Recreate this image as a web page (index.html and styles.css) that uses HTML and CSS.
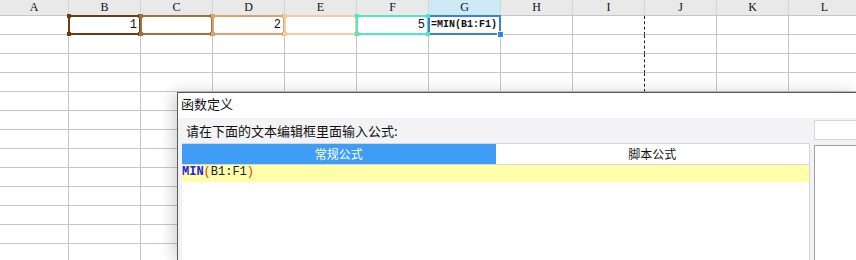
FILE: index.html
```html
<!DOCTYPE html>
<html lang="zh-CN">
<head>
    <meta charset="UTF-8">
    <title>函数定义</title>
    <link rel="stylesheet" href="styles.css">
</head>
<body>
    <div class="sheet">
        <!-- Column headers -->
        <div class="row head">
            <div class="cell col-a">A</div>
            <div class="cell">B</div>
            <div class="cell">C</div>
            <div class="cell">D</div>
            <div class="cell">E</div>
            <div class="cell">F</div>
            <div class="cell active-head">G</div>
            <div class="cell">H</div>
            <div class="cell">I</div>
            <div class="cell">J</div>
            <div class="cell">K</div>
            <div class="cell">L</div>
        </div>

        <!-- Row 1 -->
        <div class="row">
            <div class="cell col-a"></div>
            <div class="cell num ref ref-b">1</div>
            <div class="cell ref ref-c"></div>
            <div class="cell num ref ref-d">2</div>
            <div class="cell ref ref-e"></div>
            <div class="cell num ref ref-f">5</div>
            <div class="cell formula selected">=MIN(B1:F1)</div>
            <div class="cell"></div>
            <div class="cell page-break"></div>
            <div class="cell"></div>
            <div class="cell"></div>
            <div class="cell"></div>
        </div>
    </div>

    <!-- Function dialog -->
    <div class="dialog">
        <div class="dialog-title">函数定义</div>
        <div class="dialog-body">
            <div class="main-col">
                <div class="prompt">请在下面的文本编辑框里面输入公式:</div>
                <div class="editor">
                    <div class="tabs">
                        <div class="tab active">常规公式</div>
                        <div class="tab">脚本公式</div>
                    </div>
                    <div class="code">
                        <div class="code-line"><span class="kw">MIN</span><span class="paren">(</span>B1:F1<span class="paren">)</span></div>
                    </div>
                </div>
            </div>
            <div class="side-col">
                <div class="search-box"></div>
                <div class="list-box"></div>
            </div>
        </div>
    </div>

    <script>
        // fill the remaining empty rows of the sheet
        const sheet = document.querySelector(".sheet");
        for (let r = 0; r < 12; r++) {
            const row = document.createElement("div");
            row.className = "row";
            for (let c = 0; c < 12; c++) {
                const cell = document.createElement("div");
                cell.className = "cell";
                if (c === 0) cell.classList.add("col-a");
                if (c === 8) cell.classList.add("page-break");
                row.appendChild(cell);
            }
            sheet.appendChild(row);
        }
    </script>
</body>
</html>
```

FILE: styles.css
```css
html, body {
    width: 856px;
    height: 260px;
    overflow: hidden;
}

body {
    position: relative;
    margin: 0;
    background: #ffffff;
    font-family: "Noto Sans CJK SC", "Noto Sans", sans-serif;
}

.sheet {
    width: 856px;
    height: 260px;
    overflow: hidden;
}

.row {
    display: flex;
    height: 19px;
}

.cell {
    position: relative;
    box-sizing: border-box;
    width: 72px;
    flex-shrink: 0;
    border-right: 1px solid #c6c6c6;
    border-bottom: 1px solid #c6c6c6;
    font-family: "Liberation Mono", monospace;
    font-size: 11px;
    line-height: 18px;
    color: #111;
}

.cell.col-a {
    width: 69px;
}

.row.head {
    height: 16px;
}

.row.head .cell {
    background: #e9e9e9;
    border-right-color: #d4d4d4;
    border-bottom-color: #c6c6c6;
    text-align: center;
    font-family: "Liberation Serif", serif;
    font-size: 12px;
    line-height: 15px;
}

.row.head .cell.active-head {
    background: #cdeaf7;
}

.cell.page-break {
    border-right: 1px dashed #222;
}

.num {
    text-align: right;
    padding-right: 3px;
    font-size: 12px;
}

.formula {
    padding-left: 2px;
    font-size: 10px;
    font-weight: bold;
    white-space: nowrap;
}

/* reference highlight borders */
.ref::after,
.selected::after {
    content: "";
    position: absolute;
    top: -1px;
    left: -1px;
    right: -1px;
    bottom: -1px;
    border: 2px solid var(--ref);
    pointer-events: none;
}

.ref::before {
    content: "";
    position: absolute;
    top: -2px;
    left: -2px;
    right: -2px;
    bottom: -2px;
    background:
        linear-gradient(var(--ref), var(--ref)) left top / 4px 4px no-repeat,
        linear-gradient(var(--ref), var(--ref)) right top / 4px 4px no-repeat,
        linear-gradient(var(--ref), var(--ref)) left bottom / 4px 4px no-repeat,
        linear-gradient(var(--ref), var(--ref)) right bottom / 4px 4px no-repeat;
    pointer-events: none;
    z-index: 1;
}

.ref-b { --ref: #6b3e12; }
.ref-c { --ref: #a36f3e; }
.ref-d { --ref: #d9a470; }
.ref-e { --ref: #f7caa2; }
.ref-f { --ref: #52e5c6; }

.selected {
    --ref: #3a7fe3;
}

.selected::after {
    border-width: 2px;
}

.selected::before {
    content: "";
    position: absolute;
    right: -4px;
    bottom: -4px;
    width: 5px;
    height: 5px;
    background: #3a7fe3;
    border: 1px solid #fff;
    z-index: 2;
}

/* dialog */
.dialog {
    position: absolute;
    left: 177px;
    top: 92px;
    right: 0;
    bottom: 0;
    overflow: hidden;
    background: #f3f3f5;
    border-left: 1px solid #5a5a5a;
    border-top: 1px solid #5a5a5a;
    box-shadow: -4px 0 14px rgba(0, 0, 0, 0.18);
}

.dialog-title {
    height: 25px;
    background: #ffffff;
    padding-left: 3px;
    font-size: 13px;
    line-height: 22px;
    color: #111;
}

.dialog-body {
    display: flex;
    gap: 4px;
    padding-left: 4px;
}

.main-col {
    width: 628px;
    flex-shrink: 0;
}

.prompt {
    height: 25px;
    padding-left: 4px;
    font-size: 13px;
    line-height: 26px;
    color: #111;
}

.editor {
    height: 120px;
    background: #ffffff;
    border: 1px solid #d6d6d6;
    border-left: none;
}

.tabs {
    display: flex;
    height: 20px;
    border-bottom: 1px solid #d6d6d6;
}

.tab {
    flex: 1;
    text-align: center;
    font-size: 12px;
    line-height: 20px;
    color: #111;
}

.tab.active {
    background: #409df6;
    color: #ffffff;
}

.code-line {
    height: 17px;
    background: #ffffaa;
    font-family: "Liberation Mono", monospace;
    font-size: 12px;
    line-height: 15px;
    color: #222;
}

.kw {
    color: #2222e8;
    font-weight: bold;
}

.paren {
    color: #e8302a;
}

.side-col {
    flex: 1;
    display: flex;
    flex-direction: column;
    gap: 5px;
    padding-top: 2px;
}

.search-box {
    height: 18px;
    background: #ffffff;
    border: 1px solid #d6d6d6;
    border-right: none;
}

.list-box {
    height: 120px;
    background: #ffffff;
    border-left: 1px solid #a0a0a0;
    border-top: 1px solid #a0a0a0;
}
```
